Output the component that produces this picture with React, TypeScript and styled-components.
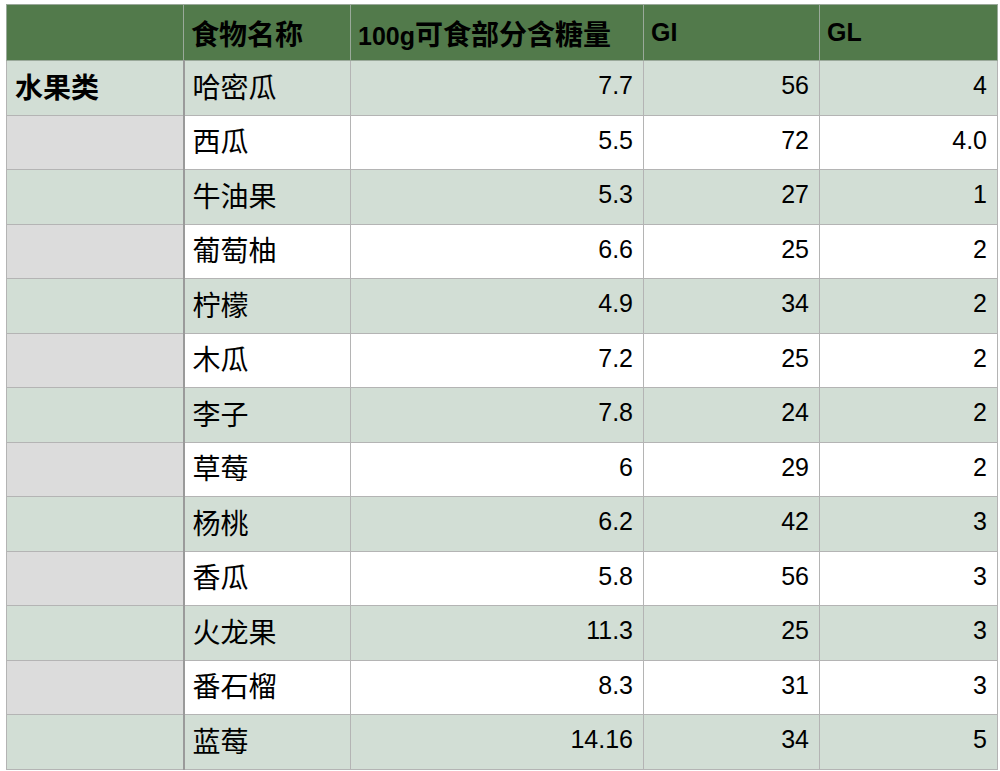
import styled, { createGlobalStyle } from "styled-components";

const GlobalStyle = createGlobalStyle`
  html, body {
    margin: 0;
    padding: 0;
    background: #ffffff;
  }
  body {
    font-family: "Liberation Sans", "Noto Sans CJK SC", sans-serif;
  }
`;

const Page = styled.div`
  padding: 4px 0 0 6px;
  width: 1000px;
  height: 771px;
  box-sizing: border-box;
  overflow: hidden;
`;

const Table = styled.table`
  border-collapse: collapse;
  table-layout: fixed;
  width: 991px;
  color: #000;
`;

const HeadCell = styled.th`
  background: #527a4b;
  height: 56px;
  padding: 0 7px;
  border: 1px solid #9aa99a;
  text-align: left;
  font-weight: 700;
  font-size: 25px;
  white-space: nowrap;
  box-sizing: border-box;
`;

const Cjk = styled.span`
  font-size: 28px;
`;

const Cell = styled.td<{ $tone: "green" | "white" | "gray"; $num?: boolean; $first?: boolean }>`
  height: 54.5px;
  padding: 0 ${(p) => (p.$num ? "10px" : "8px")} 4px;
  border: 1px solid #b4b4b4;
  ${(p) => p.$first && "border-right: 2px solid #9a9a9a;"}
  background: ${(p) =>
    p.$tone === "green" ? "#d2ded5" : p.$tone === "gray" ? "#dcdcdc" : "#ffffff"};
  text-align: ${(p) => (p.$num ? "right" : "left")};
  font-size: ${(p) => (p.$num ? "25px" : "28px")};
  font-weight: ${(p) => (p.$first ? 700 : 400)};
  white-space: nowrap;
  box-sizing: border-box;
`;

const rows: [string, string, string, string][] = [
  ["哈密瓜", "7.7", "56", "4"],
  ["西瓜", "5.5", "72", "4.0"],
  ["牛油果", "5.3", "27", "1"],
  ["葡萄柚", "6.6", "25", "2"],
  ["柠檬", "4.9", "34", "2"],
  ["木瓜", "7.2", "25", "2"],
  ["李子", "7.8", "24", "2"],
  ["草莓", "6", "29", "2"],
  ["杨桃", "6.2", "42", "3"],
  ["香瓜", "5.8", "56", "3"],
  ["火龙果", "11.3", "25", "3"],
  ["番石榴", "8.3", "31", "3"],
  ["蓝莓", "14.16", "34", "5"],
];

function App() {
  return (
    <Page>
      <GlobalStyle />
      <Table>
        <colgroup>
          <col style={{ width: 177 }} />
          <col style={{ width: 167 }} />
          <col style={{ width: 293 }} />
          <col style={{ width: 176 }} />
          <col style={{ width: 178 }} />
        </colgroup>
        <thead>
          <tr>
            <HeadCell />
            <HeadCell>
              <Cjk>食物名称</Cjk>
            </HeadCell>
            <HeadCell>
              100g<Cjk>可食部分含糖量</Cjk>
            </HeadCell>
            <HeadCell>GI</HeadCell>
            <HeadCell>GL</HeadCell>
          </tr>
        </thead>
        <tbody>
          {rows.map((r, i) => {
            const tone = i % 2 === 0 ? "green" : "white";
            return (
              <tr key={r[0]}>
                <Cell $first $tone={i % 2 === 0 ? "green" : "gray"}>
                  {i === 0 ? "水果类" : ""}
                </Cell>
                <Cell $tone={tone}>{r[0]}</Cell>
                <Cell $num $tone={tone}>{r[1]}</Cell>
                <Cell $num $tone={tone}>{r[2]}</Cell>
                <Cell $num $tone={tone}>{r[3]}</Cell>
              </tr>
            );
          })}
        </tbody>
      </Table>
    </Page>
  );
}

export default App;
